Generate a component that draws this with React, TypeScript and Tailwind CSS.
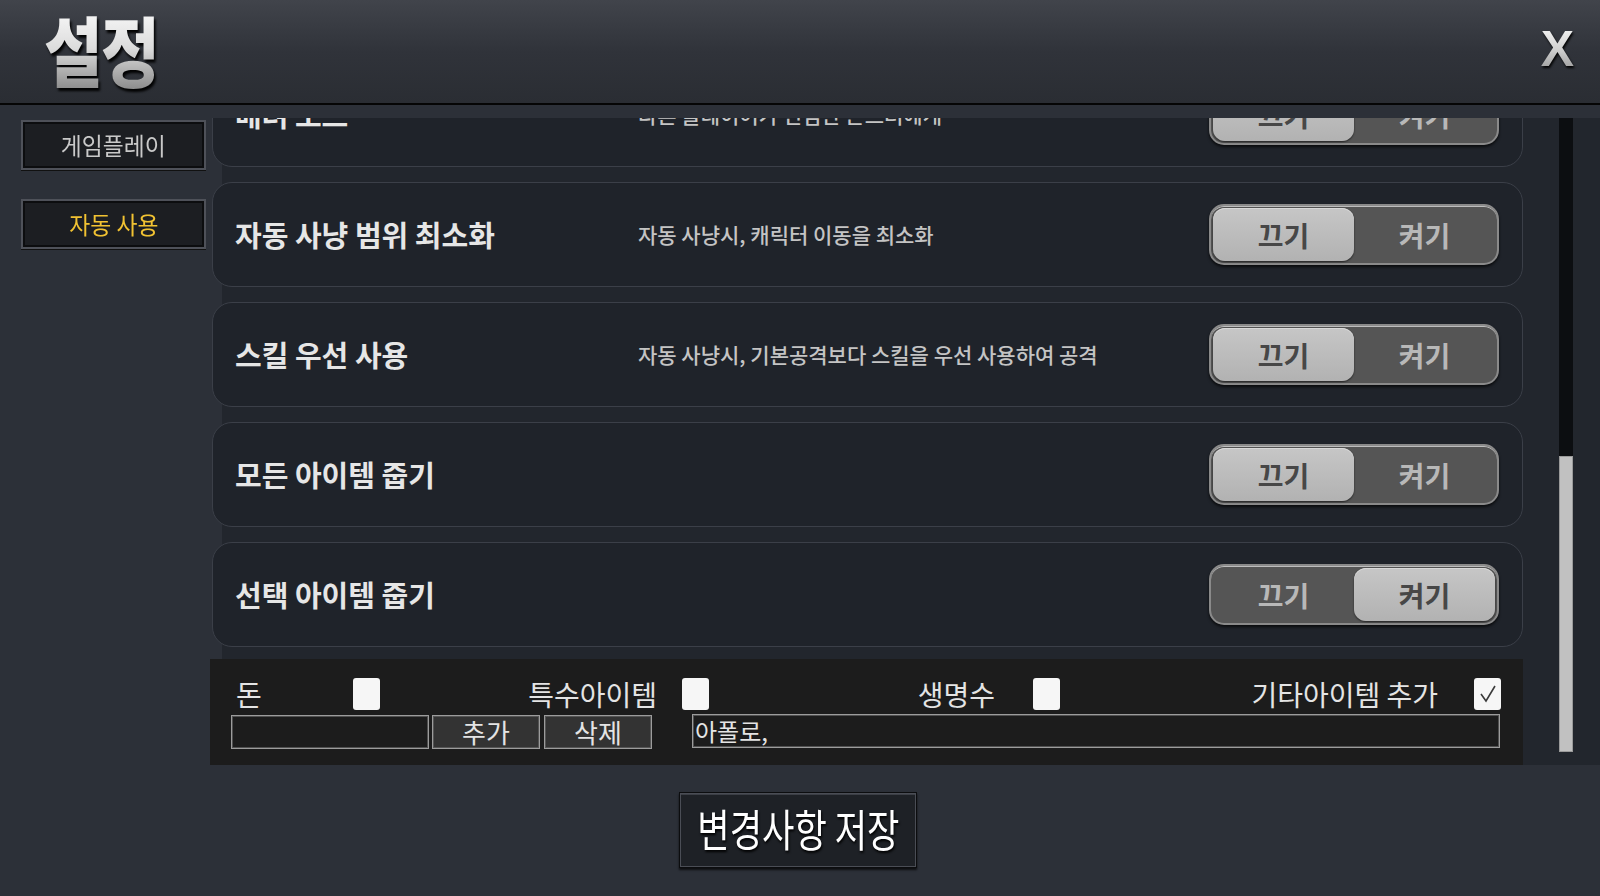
import React from "react";

const F = "font-['Noto_Sans_CJK_KR','Noto_Sans',sans-serif]";

function Toggle({ on }: { on: boolean }) {
  const knob =
    "bg-linear-to-b from-[#c6c6c6] to-[#b2b2b2] text-[#474747] shadow-[0_1px_2px_rgba(0,0,0,0.6),inset_0_1px_0_#d8d8d8]";
  const off = "text-[#b8b8b8]";
  return (
    <div className="w-[290px] h-[61px] shrink-0 rounded-[15px] border-2 border-[#8a8a8a] bg-[#555555] p-[2px] flex shadow-[0_2px_3px_rgba(0,0,0,0.7),inset_0_1px_0_#bdbdbd]">
      <div
        className={`w-[141px] h-full rounded-[12px] flex items-center justify-center text-[28px] font-bold ${
          on ? off : knob
        }`}
      >
        끄기
      </div>
      <div
        className={`flex-1 h-full rounded-[12px] flex items-center justify-center text-[28px] font-bold ${
          on ? knob : off
        }`}
      >
        켜기
      </div>
    </div>
  );
}

function Card({ title, desc, on }: { title: string; desc: string; on: boolean }) {
  return (
    <div className="h-[105px] shrink-0 rounded-[20px] border border-[#3b3f48] bg-[#1f232a] flex items-center pl-[22px] pr-[23px]">
      <div className="w-[403px] shrink-0 text-[29px] font-bold text-[#e6e6e6] whitespace-nowrap leading-none">
        {title}
      </div>
      <div className="flex-1 text-[21px] font-medium text-[#c4c4c4] whitespace-nowrap leading-none">
        {desc}
      </div>
      <Toggle on={on} />
    </div>
  );
}

function Check({ checked }: { checked?: boolean }) {
  return (
    <div className="w-[27px] h-[32px] shrink-0 rounded-[3px] bg-[#f6f6f6] flex items-center justify-center">
      {checked && (
        <svg width="20" height="22" viewBox="0 0 20 22">
          <polyline points="3,11 8,18 17,3" fill="none" stroke="#3a3a3a" strokeWidth="1.6" />
        </svg>
      )}
    </div>
  );
}

function NavBtn({ label, active }: { label: string; active?: boolean }) {
  return (
    <div className="w-[185px] h-[50px] border-2 border-[#4e5159] bg-[#1c1e22] shadow-[inset_0_0_0_2px_#0c0d0f,0_1px_0_#111] flex items-center justify-center">
      <span
        className={`inline-block scale-x-95 text-[24px] leading-none whitespace-nowrap ${
          active ? "text-[#f1c232]" : "text-[#c9c9c9]"
        }`}
      >
        {label}
      </span>
    </div>
  );
}

export default function App() {
  return (
    <div className={`${F} w-[1600px] h-[896px] overflow-hidden bg-[#2c3038] flex flex-col`}>
      {/* Header */}
      <div className="h-[105px] shrink-0 bg-linear-to-b from-[#41444b] via-[#30333a] to-[#2a2d33] border-b-2 border-[#050505] flex items-center justify-between pl-[44px] pr-[26px]">
        <span className="inline-block origin-left scale-x-84 text-[76px] font-black leading-[1.15] py-[4px] tracking-[-2px] bg-linear-to-b from-white via-[#dcdcdc] to-[#808080] bg-clip-text text-transparent drop-shadow-[2px_3px_1px_rgba(0,0,0,0.95)] -mt-[6px]">
          설정
        </span>
        <span className="font-['Liberation_Sans',sans-serif] text-[50px] font-bold leading-[1.15] bg-linear-to-b from-white via-[#d0d0d0] to-[#8a8a8a] bg-clip-text text-transparent drop-shadow-[1px_2px_1px_rgba(0,0,0,0.95)] -mt-[4px]">
          X
        </span>
      </div>

      {/* band */}
      <div className="h-[13px] shrink-0" />

      {/* Main */}
      <div className="h-[647px] shrink-0 flex">
        {/* nav */}
        <div className="w-[210px] shrink-0 flex flex-col gap-[29px] pl-[21px] pt-[2px]">
          <NavBtn label="게임플레이" />
          <NavBtn label="자동 사용" active />
        </div>

        {/* content */}
        <div className="flex-1 flex bg-[linear-gradient(to_right,#2c3038_12px,#22262d_12px)]">
          <div className="w-[1313px] shrink-0 flex flex-col">
            <div className="h-[541px] shrink-0 overflow-hidden pl-[2px]">
              <div className="-mt-[56px] flex flex-col gap-[15px]">
                <Card title="배려 모드" desc="다른 플레이어가 선점한 몬스터에게" on={false} />
                <Card title="자동 사냥 범위 최소화" desc="자동 사냥시, 캐릭터 이동을 최소화" on={false} />
                <Card title="스킬 우선 사용" desc="자동 사냥시, 기본공격보다 스킬을 우선 사용하여 공격" on={false} />
                <Card title="모든 아이템 줍기" desc="" on={false} />
                <Card title="선택 아이템 줍기" desc="" on={true} />
              </div>
            </div>

            {/* bottom panel */}
            <div className="h-[106px] shrink-0 bg-[#1c1c1c] pl-[21px] pt-[19px] text-[28px] text-[#e4e4e4] leading-none">
              <div className="flex items-center h-[32px]">
                <span className="w-[122px] pl-[5px]">돈</span>
                <Check />
                <span className="w-[277px] text-right whitespace-nowrap">특수아이템</span>
                <span className="w-[25px]" />
                <Check />
                <span className="w-[286px] text-right whitespace-nowrap">생명수</span>
                <span className="w-[38px]" />
                <Check />
                <span className="w-[378px] text-right whitespace-nowrap">기타아이템 추가</span>
                <span className="w-[36px]" />
                <Check checked />
              </div>
              <div className="flex items-center h-[34px] mt-[5px] text-[26px]">
                <div className="w-[198px] h-full border border-[#9c9c9c] shadow-[inset_0_0_0_1px_#505050] bg-[#1c1c1c]" />
                <div className="w-[108px] h-full ml-[3px] border border-[#9c9c9c] shadow-[inset_0_0_0_1px_#555] bg-[#333333] flex items-center justify-center">
                  추가
                </div>
                <div className="w-[108px] h-full ml-[4px] border border-[#9c9c9c] shadow-[inset_0_0_0_1px_#555] bg-[#333333] flex items-center justify-center">
                  삭제
                </div>
                <div className="w-[808px] h-full ml-[40px] border border-[#9c9c9c] shadow-[inset_0_0_0_1px_#505050] bg-[#1c1c1c] flex items-center pl-[2px] text-[24px] -mt-[2px]">
                  아폴로,
                </div>
              </div>
            </div>
          </div>

          {/* scrollbar */}
          <div className="ml-[36px] w-[14px] h-[634px] shrink-0 flex flex-col">
            <div className="h-[338px] bg-[#0c0e11]" />
            <div className="flex-1 bg-[#c1c1c1] border border-[#9a9a9a]" />
          </div>
        </div>
      </div>

      {/* footer */}
      <div className="flex-1 flex justify-center pt-[27px]">
        <div className="w-[238px] h-[76px] ml-[-4px] border border-[#0c0d0f] bg-[#1e2126] shadow-[inset_0_0_0_1px_#4a4d55,inset_0_2px_0_#3c3f46,0_2px_2px_rgba(0,0,0,0.7)] flex items-center justify-center">
          <span className="inline-block scale-x-80 text-[44px] text-white leading-none whitespace-nowrap drop-shadow-[1px_2px_1px_rgba(0,0,0,0.95)] -mt-[4px]">
            변경사항 저장
          </span>
        </div>
      </div>
    </div>
  );
}
